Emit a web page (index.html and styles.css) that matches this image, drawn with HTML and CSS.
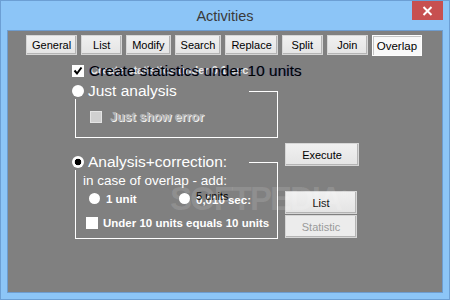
FILE: index.html
```html
<!DOCTYPE html>
<html lang="en">
<head>
  <meta charset="UTF-8">
  <title>Activities</title>
  <link rel="stylesheet" href="styles.css">
</head>
<body>
  <div class="window">
    <div class="titlebar">
      <span></span>
      <span class="title">Activities</span>
      <button class="close">
        <svg width="11" height="10" viewBox="0 0 11 10"><path d="M1.5 1 L9.5 9 M9.5 1 L1.5 9" stroke="#fff" stroke-width="2"/></svg>
      </button>
    </div>
    <div class="client">
      <div class="tabs">
        <button class="btn tab">General</button>
        <button class="btn tab">List</button>
        <button class="btn tab">Modify</button>
        <button class="btn tab">Search</button>
        <button class="btn tab">Replace</button>
        <button class="btn tab">Split</button>
        <button class="btn tab">Join</button>
        <button class="btn tab active">Overlap</button>
      </div>

      <div class="main">
        <div class="left">
          <div class="check-row">
            <span class="box">
              <svg width="12" height="12" viewBox="0 0 12 12"><path d="M2.5 5.5 L5 8.5 L9.5 2.5" stroke="#000" stroke-width="2" fill="none"/></svg>
            </span>
            <span class="overlap-text">
              <span class="ghost">Create statistics under 0,1 sec</span>
              <span class="label">Create statistics under 10 units</span>
            </span>
          </div>

          <div class="group group-first">
            <div class="legend">
              <span class="radio"></span>
              <span>Just analysis</span>
            </div>
            <div class="sub-row disabled-row">
              <span class="box disabled"></span>
              <span>Just show error</span>
            </div>
          </div>

          <div class="group group-second">
            <div class="legend">
              <span class="radio checked"></span>
              <span>Analysis+correction:</span>
            </div>
            <div class="note">in case of overlap - add:</div>
            <div class="options">
              <div class="opt">
                <span class="radio small"></span>
                <span class="bold">1 unit</span>
              </div>
              <div class="opt">
                <span class="radio small"></span>
                <span class="overlap-text">
                  <span class="bold">0,010 sec:</span>
                  <span class="ghost-dark">5 units</span>
                </span>
              </div>
            </div>
            <div class="under-row">
              <span class="box"></span>
              <span class="bold">Under 10 units equals 10 units</span>
            </div>
          </div>
        </div>

        <div class="right">
          <button class="btn execute">Execute</button>
          <button class="btn side list">List</button>
          <button class="btn side statistic" disabled>Statistic</button>
        </div>
      </div>

      <div class="watermark">SOFTPEDIA<sup>®</sup></div>
    </div>
  </div>
</body>
</html>
```

FILE: styles.css
```css
body {
  margin: 0;
  font-family: "Liberation Sans", Arial, sans-serif;
}
.window {
  width: 450px;
  height: 300px;
  box-sizing: border-box;
  border: 1px solid #6c9fd4;
  background-color: #8cc5f7;
  display: flex;
  flex-direction: column;
}
.titlebar {
  height: 29px;
  display: grid;
  grid-template-columns: 1fr auto 1fr;
  align-items: start;
}
.title {
  font-size: 14.5px;
  line-height: 30px;
  color: #3a3a3a;
}
.close {
  justify-self: end;
  width: 31px;
  height: 19px;
  margin-right: 6px;
  padding: 0;
  border: none;
  background-color: #c75050;
  display: flex;
  align-items: center;
  justify-content: center;
}
.client {
  flex: 1;
  margin: 0 6px 6px;
  border: 1px solid #6e9cce;
  background-color: #808080;
  position: relative;
  overflow: hidden;
}
.tabs {
  display: flex;
  gap: 4px;
  padding: 4px 0 0 18px;
  align-items: flex-start;
}
.btn {
  font-family: "Liberation Sans", Arial, sans-serif;
  font-size: 11px;
  color: #000;
  height: 20px;
  min-width: 41px;
  padding: 0 5px;
  box-sizing: border-box;
  border: 1px solid #d6d6d6;
  background: linear-gradient(#f0f0f0, #e4e4e4);
  box-shadow: inset -1px -1px 0 #b4b4b4;
}
.tab.active {
  height: 21px;
  font-size: 11.5px;
  background: #f8f8f8;
  border-color: #fdfdfd;
  box-shadow: inset 1px 1px 0 #c4c4c4;
  padding: 1px 4px 0;
}
.main {
  display: flex;
  gap: 7px;
  padding: 7px 0 0 64px;
}
.left {
  width: 206px;
}
.check-row {
  display: flex;
  align-items: center;
  height: 16px;
}
.box {
  width: 12px;
  height: 12px;
  background-color: #fff;
  flex: none;
  display: block;
}
.box svg {
  display: block;
}
.check-row .box {
  margin-right: 5px;
}
.overlap-text {
  position: relative;
  white-space: nowrap;
}
.label {
  position: relative;
  font-size: 15.5px;
  line-height: 16px;
  color: #000;
  text-shadow: -1px 0 0 rgba(40, 60, 170, 0.45);
}
.ghost {
  position: absolute;
  left: 1px;
  top: 2px;
  font-size: 11px;
  font-weight: bold;
  color: #e8e8e8;
}
.group {
  border: 1px solid #fff;
  width: 203px;
  box-sizing: border-box;
  margin-left: 3px;
}
.group-first {
  margin-top: 12px;
  padding-bottom: 13px;
}
.group-second {
  margin-top: 24px;
  padding-bottom: 8px;
}
.legend {
  margin: -10px 0 0 -4px;
  width: 177px;
  height: 17px;
  background-color: #808080;
  display: flex;
  align-items: center;
  font-size: 15.5px;
  line-height: 17px;
  color: #fff;
}
.radio {
  width: 12px;
  height: 12px;
  border-radius: 50%;
  background-color: #fff;
  margin-right: 4px;
  flex: none;
}
.radio.checked {
  background: radial-gradient(circle, #000 0 3px, #fff 3.6px);
}
.radio.small {
  width: 11px;
  height: 11px;
  margin-right: 6px;
}
.sub-row {
  margin-top: 10px;
  padding-left: 14px;
  display: flex;
  align-items: center;
  gap: 8px;
  height: 15px;
}
.disabled-row {
  font-size: 12.5px;
  font-weight: bold;
  color: #b0b0b0;
  text-shadow: 1px 1px 0 #f2f2f2;
}
.box.disabled {
  background-color: #d0d0d0;
  box-shadow: inset 0 0 0 1px #e4e4e4;
}
.note {
  margin-top: 3px;
  padding-left: 7px;
  font-size: 13.5px;
  line-height: 15px;
  color: #fff;
}
.options {
  margin-top: 3px;
  padding-left: 13px;
  display: flex;
  height: 15px;
  align-items: center;
}
.opt {
  display: flex;
  align-items: center;
  width: 90px;
}
.bold {
  font-size: 11.5px;
  font-weight: bold;
  color: #fff;
}
.ghost-dark {
  position: absolute;
  left: 0;
  top: 0;
  font-size: 11px;
  color: #000;
}
.under-row {
  margin-top: 9px;
  padding-left: 10px;
  display: flex;
  align-items: center;
  gap: 5px;
  height: 15px;
}
.right {
  display: flex;
  flex-direction: column;
  align-items: flex-start;
}
.execute {
  margin-top: 80px;
  width: 74px;
  height: 23px;
}
.side {
  width: 72px;
  height: 23px;
}
.list {
  margin-top: 25px;
}
.statistic {
  margin-top: 1px;
  color: #9a9a9a;
  background: #ececec;
}
.watermark {
  position: absolute;
  left: 162px;
  top: 149px;
  font-size: 33px;
  font-weight: bold;
  letter-spacing: -2px;
  color: rgba(255, 255, 255, 0.13);
  pointer-events: none;
}
.watermark sup {
  font-size: 10px;
  letter-spacing: 0;
}
```
